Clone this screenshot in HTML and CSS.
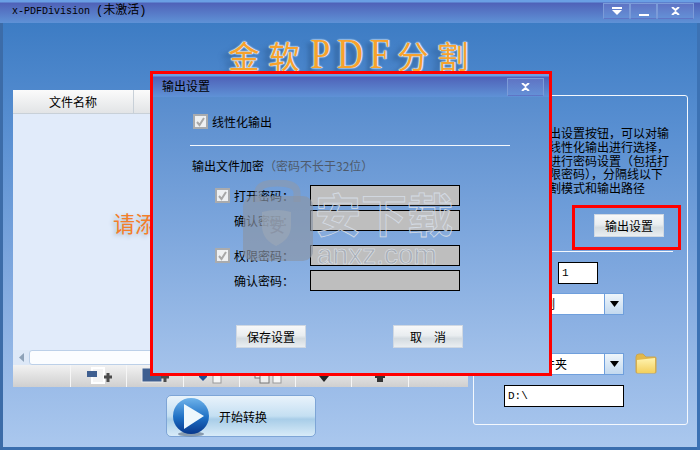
FILE: index.html
```html
<!DOCTYPE html>
<html lang="zh-CN">
<head>
    <meta charset="UTF-8">
    <title>x-PDFDivision</title>
    <link rel="stylesheet" href="styles.css">
</head>
<body>
<div class="window">
    <div class="titlebar">
        <span class="title"><span class="latin">x-PDFDivision </span>(未激活)</span>
        <div class="win-btns">
            <div class="win-btn wb-menu"><svg width="10" height="8" viewBox="0 0 10 8"><rect width="10" height="2" fill="#fff"/><path d="M0 3h10L5 8z" fill="#fff"/></svg></div>
            <div class="win-btn wb-min"><svg width="10" height="12" viewBox="0 0 10 12"><rect y="9" width="10" height="2" fill="#fff"/></svg></div>
            <div class="win-btn wb-close"><svg width="9" height="8" viewBox="0 0 9 8"><path d="M1 0l3.500 3L8 0M1 8l3.500-3L8 8" stroke="#fff" stroke-width="2" fill="none"/></svg></div>
        </div>
    </div>

    <h1 class="banner">金软<span class="banner-latin">PDF</span>分割</h1>

    <div class="main">
        <div class="left">
            <div class="files">
                <div class="file-head">
                    <div class="col-name">文件名称</div>
                    <div class="col-rest"></div>
                </div>
                <div class="file-body"><span class="hint">请添加需要分割的文件</span></div>
                <div class="hscroll">
                    <div class="scroll-arrow"><svg width="5" height="9" viewBox="0 0 5 9"><path d="M5 0v9L0 4.500z" fill="#8ea2b8"/></svg></div>
                    <div class="scroll-thumb"></div>
                </div>
                <div class="toolbar">
                    <div class="tool tool-first"></div>
                    <div class="tool">
                        <svg width="26" height="18" viewBox="0 0 26 18"><rect x="6" y="1" width="12" height="15" fill="#f4f4f4" stroke="#fff" stroke-width="2"/><rect x="1" y="4" width="10" height="6" fill="#3f5f90"/><path d="M18 10h8M22 6v9" stroke="#4b4b4b" stroke-width="3"/></svg>
                    </div>
                    <div class="tool">
                        <svg width="28" height="18" viewBox="0 0 28 18"><rect x="1" y="1" width="20" height="14" fill="#3f5f90" stroke="#eee"/><path d="M20 10h8M24 6v9" stroke="#4b4b4b" stroke-width="3"/></svg>
                    </div>
                    <div class="tool">
                        <svg width="26" height="18" viewBox="0 0 26 18"><path d="M1 8h8v2l-4 4-4-4z" fill="#1f4f95"/><rect x="15" y="4" width="8" height="12" fill="#f6f6f6" stroke="#999"/></svg>
                    </div>
                    <div class="tool">
                        <svg width="28" height="18" viewBox="0 0 28 18"><rect x="1" y="6" width="6" height="5" fill="#eee" stroke="#777"/><rect x="6" y="8" width="9" height="8" fill="#eee" stroke="#777"/><rect x="19" y="4" width="8" height="12" fill="#f6f6f6" stroke="#999"/></svg>
                    </div>
                    <div class="tool">
                        <svg width="12" height="18" viewBox="0 0 12 18"><path d="M1 9h10l-5 6z" fill="#222"/></svg>
                    </div>
                    <div class="tool">
                        <svg width="12" height="18" viewBox="0 0 12 18"><path d="M1 9h10v2H9v4H3v-4H1z" fill="#333"/></svg>
                    </div>
                    <div class="tool tool-last"></div>
                </div>
            </div>
            <div class="start-btn">
                <svg class="play" width="38" height="40" viewBox="0 0 38 40">
                    <defs>
                        <linearGradient id="playFill" x1="0" y1="0" x2="0" y2="1">
                            <stop offset="0" stop-color="#6fb3ea"/>
                            <stop offset="0.55" stop-color="#1d6fc4"/>
                            <stop offset="1" stop-color="#08378c"/>
                        </linearGradient>
                    </defs>
                    <ellipse cx="19" cy="37" rx="13" ry="2.500" fill="#55687f" opacity="0.6"/>
                    <circle cx="19" cy="19" r="18" fill="url(#playFill)"/>
                    <path d="M12 7l20 12-20 13z" fill="#eef8fd"/>
                </svg>
                <span>开始转换</span>
            </div>
        </div>

        <div class="panel">
            <p class="desc">点击下方输出设置按钮，可以对输<br>输出文件的线性化输出进行选择，<br>线以上，可进行密码设置（包括打<br>开密码和权限密码），分隔线以下<br>设置文件分割模式和输出路径</p>
            <div class="mark-wrap">
                <div class="mark-box"><div class="btn">输出设置</div></div>
            </div>
            <div class="panel-line"></div>
            <div class="row row-pages">
                <span class="row-label">分割页数</span>
                <div class="field field-small">1</div>
            </div>
            <div class="combo combo-mode">
                <span class="combo-text">按页分割</span>
                <div class="combo-arrow"><svg width="9" height="6" viewBox="0 0 9 6"><path d="M0 0h9L4.500 6z" fill="#000"/></svg></div>
            </div>
            <div class="path-label">输出路径</div>
            <div class="row row-folder">
                <div class="combo">
                    <span class="combo-text">选择文件夹</span>
                    <div class="combo-arrow"><svg width="9" height="6" viewBox="0 0 9 6"><path d="M0 0h9L4.500 6z" fill="#000"/></svg></div>
                </div>
                <svg class="folder" width="22" height="21" viewBox="0 0 22 21">
                    <defs>
                        <linearGradient id="folderFill" x1="0" y1="0" x2="0" y2="1">
                            <stop offset="0" stop-color="#fff3b0"/>
                            <stop offset="1" stop-color="#f3cf5c"/>
                        </linearGradient>
                    </defs>
                    <path d="M1 4q0-3 3-3h4l3 3h9q1 0 1 1v14q0 1-1 1H2q-1 0-1-1z" fill="#e3b84a" stroke="#c9a552"/>
                    <path d="M2 7l18-2v14q0 1-1 1H3q-1 0-1-1z" fill="url(#folderFill)"/>
                </svg>
            </div>
            <div class="field field-path">D:\</div>
        </div>
    </div>

    <div class="dialog">
        <div class="titlebar dialog-title">
            <span class="dialog-name">输出设置</span>
            <div class="win-btn dialog-close"><svg width="9" height="8" viewBox="0 0 9 8"><path d="M1 0l3.500 3L8 0M1 8l3.500-3L8 8" stroke="#fff" stroke-width="2" fill="none"/></svg></div>
        </div>
        <div class="dialog-body">
            <label class="check-row linear">
                <span class="check"><svg width="11" height="11" viewBox="0 0 11 11"><path d="M2 6l2.500 3L9 2" stroke="#a8a8a8" stroke-width="2" fill="none"/></svg></span>
                线性化输出
            </label>
            <div class="dialog-line"></div>
            <div class="encrypt">输出文件加密<span class="encrypt-note">（密码不长于32位）</span></div>
            <div class="pw-grid">
                <span class="check"><svg width="11" height="11" viewBox="0 0 11 11"><path d="M2 6l2.500 3L9 2" stroke="#a8a8a8" stroke-width="2" fill="none"/></svg></span>
                <span>打开密码：</span>
                <div class="pw-input"></div>
                <span></span>
                <span>确认密码：</span>
                <div class="pw-input"></div>
                <span class="check gap-top"><svg width="11" height="11" viewBox="0 0 11 11"><path d="M2 6l2.500 3L9 2" stroke="#a8a8a8" stroke-width="2" fill="none"/></svg></span>
                <span class="gap-top">权限密码：</span>
                <div class="pw-input gap-top"></div>
                <span></span>
                <span>确认密码：</span>
                <div class="pw-input"></div>
            </div>
            <div class="dialog-btns">
                <div class="btn">保存设置</div>
                <div class="btn">取　消</div>
            </div>
        </div>
        <svg class="watermark" width="222" height="100" viewBox="0 0 222 100">
            <path d="M17 22V13Q17 3 36 3Q56 3 56 13V22" fill="none" stroke="#8d99ab" stroke-width="7" opacity="0.6"/>
            <rect x="2" y="16" width="70" height="65" rx="10" fill="#8a94a6" opacity="0.66"/>
            <path d="M21 32q15-4 29 0v14q0 13-15 20q-14-7-14-20z" fill="#9aa6b6" opacity="0.7"/>
            <text class="wm-small" x="28" y="52">安</text>
            <text class="wm-cn" x="74" y="52">安下载</text>
            <text class="wm-en" x="76" y="84">anxz.com</text>
        </svg>
    </div>
</div>
</body>
</html>
```

FILE: styles.css
```css
* {
    box-sizing: border-box;
}
body {
    margin: 0;
    font-family: "Noto Sans CJK SC", "Liberation Sans", sans-serif;
    font-size: 12px;
    color: #000;
}
.window {
    position: relative;
    width: 700px;
    height: 450px;
    overflow: hidden;
    background: linear-gradient(#3d7cc4 5%, #5a90d2 30%, #84abe0 65%, #abc8ee 100%);
    box-shadow: inset 3px 0 0 #3c6ca8, inset -3px 0 0 #3c72b4, inset 0 -3px 0 #3a6eae;
}
.titlebar {
    display: flex;
    justify-content: space-between;
    height: 23px;
    background: linear-gradient(#6a9fe4 0, #6a9fe4 2px, #4f62b8 3px, #5f92d6 100%);
}
.title {
    padding: 3px 0 0 12px;
    font-family: "Liberation Mono", "Noto Sans CJK SC", monospace;
    line-height: 16px;
    white-space: pre;
}
.latin {
    font-size: 10px;
}
.win-btns {
    display: flex;
    margin: 3px 6px 0 0;
    height: 16px;
}
.win-btn {
    display: flex;
    align-items: center;
    justify-content: center;
    height: 16px;
    border: 1px solid #7c9bd8;
    border-bottom-color: transparent;
    background: linear-gradient(#5f74c4, #6490d6);
}
.wb-menu {
    width: 27px;
}
.wb-min {
    width: 27px;
}
.wb-close {
    width: 37px;
}
.banner {
    display: flex;
    justify-content: center;
    align-items: baseline;
    height: 67px;
    margin: 0;
    padding: 9px 0 0 6px;
    font-size: 31px;
    font-weight: 400;
    line-height: 44px;
    letter-spacing: 9px;
    color: #f7a22c;
    text-shadow: 0 0 2px #dcebf8, 0 0 2px #dcebf8, 1px 0 1px #dcebf8, -1px 0 1px #dcebf8, -7px 4px 5px rgba(44, 91, 146, 0.75);
}
.banner-latin {
    display: inline-block;
    margin: 0 -7px 0 -5px;
    font-family: "Liberation Serif", serif;
    font-size: 42px;
    font-weight: 400;
    letter-spacing: 8px;
    transform: scaleX(0.85);
}
.main {
    display: flex;
    align-items: flex-start;
    padding-left: 13px;
}
.left {
    width: 455px;
}
.files {
    display: flex;
    flex-direction: column;
    height: 297px;
}
.file-head {
    display: flex;
    height: 24px;
    background: linear-gradient(#fbfbfb, #e2e4e6);
    border-bottom: 1px solid #c8d0d8;
}
.col-name {
    width: 121px;
    border-right: 1px solid #c8d0d8;
    text-align: center;
    line-height: 23px;
}
.file-body {
    flex: 1;
    padding: 93px 0 0 100px;
    background: #e1ebfa;
}
.hint {
    font-size: 22px;
    line-height: 30px;
    color: #f47e2a;
    text-shadow: -2px 2px 4px #a9b8cc;
}
.hscroll {
    display: flex;
    align-items: center;
    height: 15px;
    background: #dde8f7;
}
.scroll-arrow {
    display: flex;
    justify-content: center;
    width: 16px;
}
.scroll-thumb {
    width: 430px;
    height: 15px;
    border: 1px solid #bcd0e8;
    border-radius: 3px;
    background: #fbfdff;
}
.toolbar {
    display: flex;
    height: 22px;
    background: linear-gradient(#f2f2f2, #cfcfcf);
}
.tool {
    display: flex;
    align-items: center;
    justify-content: center;
    width: 56.300px;
    border-right: 1px solid #f6f6f6;
}
.tool-first {
    width: 58px;
}
.tool-last {
    flex: 1;
    border-right: 0;
}
.start-btn {
    display: flex;
    align-items: center;
    gap: 9px;
    width: 150px;
    height: 42px;
    margin: 8px 0 0 153px;
    padding: 0 0 0 5px;
    border: 1px solid #7ea5d6;
    border-radius: 5px;
    background: linear-gradient(#e9f3fb, #c4dff2 50%, #a8cde8 58%, #d8ebf8);
}
.play {
    margin-top: 2px;
}
.panel {
    width: 215px;
    height: 330px;
    margin: 5px 0 0 5px;
    border: 1px solid #f4f8fd;
    border-radius: 3px;
    padding-left: 30px;
}
.desc {
    margin: 30px 0 0 -15px;
    line-height: 13.750px;
    white-space: nowrap;
}
.mark-wrap {
    display: flex;
    justify-content: flex-end;
    margin: 10px 6px 0 0;
}
.mark-box {
    padding: 6px 14px 10px 19px;
    border: 3px solid #f00;
}
.btn {
    width: 70px;
    height: 23px;
    border: 1px solid #d0d8e2;
    background: linear-gradient(#f7f8f9, #e9edf0 45%, #d4dbe0 60%, #eaeef1);
    text-align: center;
    line-height: 21px;
}
.panel-line {
    width: 190px;
    height: 1px;
    margin: 1px 0 0 -21px;
    background: #f4f8fd;
}
.row {
    display: flex;
    align-items: center;
}
.row-pages {
    margin-top: 10px;
}
.row-label {
    width: 54px;
}
.field {
    height: 22px;
    border: 1px solid #000;
    padding-left: 3px;
    background: #fff;
    font-family: "Liberation Mono", monospace;
    font-size: 11px;
    line-height: 20px;
}
.field-small {
    width: 40px;
}
.combo {
    display: flex;
    width: 120px;
    height: 22px;
    border: 1px solid #6f9fdc;
    background: #fff;
}
.combo-mode {
    margin-top: 9px;
}
.combo-text {
    flex: 1;
    padding-left: 2px;
    line-height: 20px;
}
.combo-arrow {
    display: flex;
    align-items: center;
    justify-content: center;
    width: 19px;
    border-left: 1px solid #6f9fdc;
    background: linear-gradient(#eef5fb, #c3d9ef);
}
.path-label {
    height: 38px;
    line-height: 38px;
}
.row-folder {
    gap: 11px;
}
.field-path {
    width: 120px;
    margin-top: 10px;
}
.dialog {
    position: absolute;
    left: 150px;
    top: 71px;
    width: 402px;
    height: 305px;
    border: 3px solid #f00;
    background: linear-gradient(#5288cb, #7ba5dc 50%, #a5c3eb);
}
.dialog-title {
    padding-right: 5px;
}
.dialog-name {
    padding: 4px 0 0 9px;
    line-height: 16px;
}
.dialog-close {
    width: 37px;
    height: 18px;
    margin-top: 4px;
}
.dialog-body {
    padding: 17px 0 0 37px;
}
.check {
    display: flex;
    align-items: center;
    justify-content: center;
    width: 15px;
    height: 15px;
    border: 2px solid #a9abae;
    background: #eef0f2;
}
.check-row {
    display: flex;
    align-items: center;
    gap: 4px;
    margin-left: 3px;
    line-height: 15px;
}
.dialog-line {
    width: 320px;
    height: 1px;
    margin: 16px 0 0 0;
    background: #f4f8fd;
}
.encrypt {
    margin: 11px 0 0 2px;
    line-height: 18px;
}
.encrypt-note {
    color: #4e5a6c;
}
.pw-grid {
    display: grid;
    grid-template-columns: 15px 72px 150px;
    grid-template-rows: 21px 21px 31px 21px;
    column-gap: 4px;
    row-gap: 4px;
    align-items: center;
    margin: 10px 0 0 25px;
}
.pw-input {
    height: 21px;
    border: 1px solid #000;
    background: #bebebe;
}
.gap-top {
    margin-top: 10px;
}
.dialog-btns {
    display: flex;
    gap: 87px;
    margin: 34px 0 0 46px;
}
.watermark {
    position: absolute;
    left: 88px;
    top: 106px;
}
.wm-small {
    font-size: 16px;
    fill: #8a94a6;
}
.wm-cn {
    font-size: 46px;
    font-weight: 700;
    fill: rgba(190, 200, 215, 0.12);
    stroke: #d5dce5;
    stroke-width: 0.800;
}
.wm-en {
    font-family: "Liberation Sans", sans-serif;
    font-size: 28px;
    fill: #a9afb8;
    stroke: #e3e8ee;
    stroke-width: 0.500;
}
```
